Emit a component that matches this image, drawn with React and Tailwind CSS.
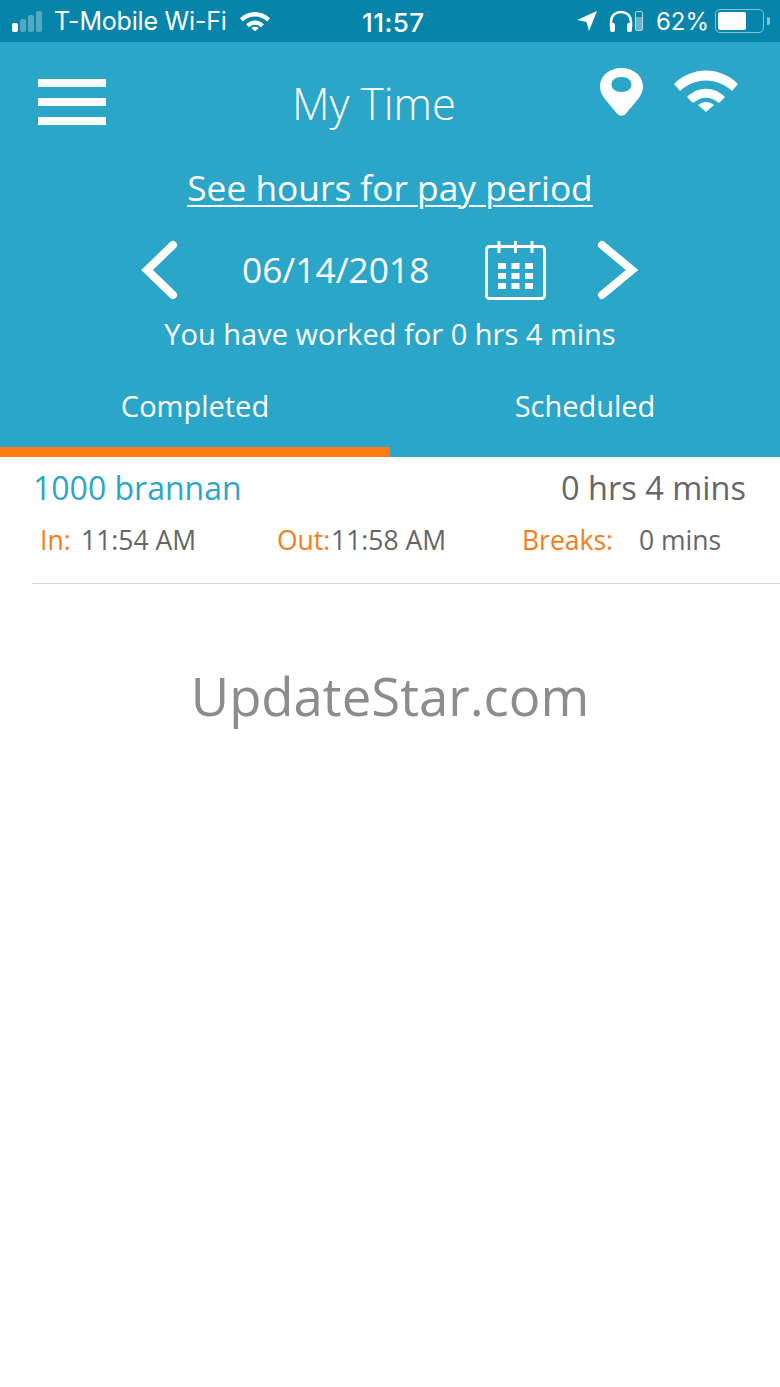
const Wifi = ({ className }) => (
    <svg viewBox="0 0 64 42" className={className} fill="currentColor">
        <path d="M0 14 C18 -4 46 -4 64 14 L58 21 C43 7 21 7 6 21 Z" />
        <path d="M13 27 C24 16 40 16 51 27 L45 33 C36 26 28 26 19 33 Z" />
        <path d="M24 35 C29 31 35 31 40 35 L32 42 Z" />
    </svg>
);

const Pin = ({ className }) => (
    <svg viewBox="0 0 43 48" className={className} fill="currentColor">
        <path
            fillRule="evenodd"
            d="M21.5 0 C33.5 0 43 8 43 18.500 C43 23 41 27 38.500 30.500 L26 45.500 C23.500 48.500 19.500 48.500 17 45.500 L4.500 30.500 C2 27 0 23 0 18.500 C0 8 9.500 0 21.500 0 Z M21.500 9 C15.500 9 11.500 12 11.500 16.500 C11.500 21 15.500 24 21.500 24 C27.500 24 31.500 21 31.500 16.500 C31.500 12 27.500 9 21.500 9 Z"
        />
    </svg>
);

const CalendarIcon = ({ className }) => (
    <svg viewBox="0 0 61 60" className={className} fill="none" stroke="currentColor">
        <rect x="1.500" y="6.500" width="58" height="52" rx="3" strokeWidth="3" />
        <path d="M14 1v12M30.500 1v12M47 1v12" strokeWidth="3" />
        <g fill="currentColor" stroke="none">
            <rect x="13" y="23" width="8" height="6" />
            <rect x="26.500" y="23" width="8" height="6" />
            <rect x="40" y="23" width="8" height="6" />
            <rect x="13" y="33" width="8" height="6" />
            <rect x="26.500" y="33" width="8" height="6" />
            <rect x="40" y="33" width="8" height="6" />
            <rect x="13" y="43" width="8" height="6" />
            <rect x="26.500" y="43" width="8" height="6" />
            <rect x="40" y="43" width="8" height="6" />
        </g>
    </svg>
);

const Chevron = ({ d, className }) => (
    <svg viewBox="0 0 42 60" className={className} fill="none" stroke="currentColor" strokeWidth="8" strokeLinecap="round">
        <path d={d} />
    </svg>
);

const StatusBar = () => (
    <div className="h-[42px] bg-[#0784aa] flex items-center justify-between pl-[12px] pr-[10px] text-white text-[24px] font-['Inter',sans-serif]">
        <div className="flex items-center">
            {/* signal bars */}
            <div className="flex items-end gap-[2px] w-[36px]">
                <span className="w-[6px] h-[9px] rounded-[2px] bg-white" />
                <span className="w-[6px] h-[13px] rounded-[2px] bg-white/30" />
                <span className="w-[6px] h-[17px] rounded-[2px] bg-white/30" />
                <span className="w-[6px] h-[21px] rounded-[2px] bg-white/30" />
            </div>
            <span className="ml-[6px] pt-[2px] text-[25px] tracking-[-0.2px]">T-Mobile Wi-Fi</span>
            <Wifi className="ml-[13px] w-[30px] h-[21px]" />
        </div>
        <span className="font-medium absolute left-[362px] pt-[2px] text-[26px] tracking-[0.4px]">11:57</span>
        <div className="flex items-center">
            <svg viewBox="0 0 20 20" className="w-[20px] h-[20px]" fill="currentColor">
                <path d="M20 0 L12 20 L9.500 11 L0 9 Z" />
            </svg>
            <svg viewBox="0 0 24 22" className="ml-[12px] w-[24px] h-[22px]" fill="none" stroke="currentColor" strokeWidth="2.500">
                <path d="M2 17 V12 C2 -1.500 22 -1.500 22 12 V17" />
                <rect x="1" y="13" width="5" height="9" rx="2" fill="currentColor" stroke="none" />
                <rect x="18" y="13" width="5" height="9" rx="2" fill="currentColor" stroke="none" />
            </svg>
            <div className="ml-[2px] w-[8px] h-[20px] border border-white/70 rounded-[2px] flex items-end">
                <span className="w-full h-[13px] bg-white/40" />
            </div>
            <span className="ml-[13px] pt-[2px]">62%</span>
            <div className="ml-[6px] w-[49px] h-[24px] border border-white/50 rounded-[5px] p-[2px] flex">
                <span className="w-[28px] h-full bg-white rounded-[2px]" />
            </div>
            <span className="ml-[3px] w-[3px] h-[8px] bg-white/50 rounded-r-[2px]" />
        </div>
    </div>
);

const Header = () => (
    <div className="bg-[#2ba6c8] text-white font-['Open_Sans',sans-serif]">
        <div className="h-[123px] pl-[38px] pr-[42px] flex items-start">
            <div className="mt-[37px] w-[68px] h-[46px] flex flex-col justify-between">
                <span className="h-[8px] bg-white" />
                <span className="h-[8px] bg-white" />
                <span className="h-[8px] bg-white" />
            </div>
            <h1 className="ml-[186px] mt-[34px] text-[43.500px] leading-[56px] font-light">My Time</h1>
            <div className="ml-auto flex items-start mt-[26px]">
                <Pin className="w-[43px] h-[48px]" />
                <Wifi className="ml-[31px] mt-[2px] w-[64px] h-[42px]" />
            </div>
        </div>
        <div className="h-[44px] flex items-center justify-center">
            <a className="text-[35.300px] leading-[44px] underline underline-offset-[4px] decoration-2">See hours for pay period</a>
        </div>
        <div className="mt-[31px] h-[60px] flex items-center pl-[141px]">
            <Chevron d="M32 5 L6 30 L32 55" className="w-[42px] h-[60px]" />
            <span className="ml-[59px] pb-[2px] text-[35.300px] leading-[58px]">06/14/2018</span>
            <CalendarIcon className="ml-[56px] w-[61px] h-[60px]" />
            <Chevron d="M6 5 L36 30 L6 55" className="ml-[50px] w-[42px] h-[60px]" />
        </div>
        <p className="mt-[14px] text-center text-[29px] leading-[40px]">You have worked for 0 hrs 4 mins</p>
        <div className="mt-[32px] flex h-[61px]">
            <div className="w-1/2 text-center text-[29px] leading-[40px]">Completed</div>
            <div className="w-1/2 text-center text-[29px] leading-[40px]">Scheduled</div>
        </div>
        <div className="flex h-[10px]">
            <span className="w-1/2 bg-[#fb7e14]" />
        </div>
    </div>
);

const EntryRow = () => (
    <div className="ml-[32px] h-[127px] border-b border-[#d9d9d9]">
        <div className="flex justify-between pl-[1px] pr-[34px] pt-[8px] leading-[46px]">
            <span className="text-[32px] text-[#2ba6c8]">1000 brannan</span>
            <span className="text-[32.500px] text-[#666666]">0 hrs 4 mins</span>
        </div>
        <div className="mt-[9px] flex pl-[8px] text-[26.500px] leading-[40px] text-[#666666]">
            <span className="w-[41px] text-[#f47d20]">In:</span>
            <span className="w-[196px]">11:54 AM</span>
            <span className="w-[54px] text-[#f47d20]">Out:</span>
            <span className="w-[191px]">11:58 AM</span>
            <span className="w-[117px] text-[#f47d20]">Breaks:</span>
            <span>0 mins</span>
        </div>
    </div>
);

const App = () => {
    return (
        <div className="relative w-[780px] h-[1387px] bg-white overflow-hidden font-['Open_Sans',sans-serif]">
            <StatusBar />
            <Header />
            <EntryRow />
            <p className="mt-[76px] text-center text-[52.700px] leading-[72px] text-[#8c8c8c]">UpdateStar.com</p>
        </div>
    );
};

export default App;
